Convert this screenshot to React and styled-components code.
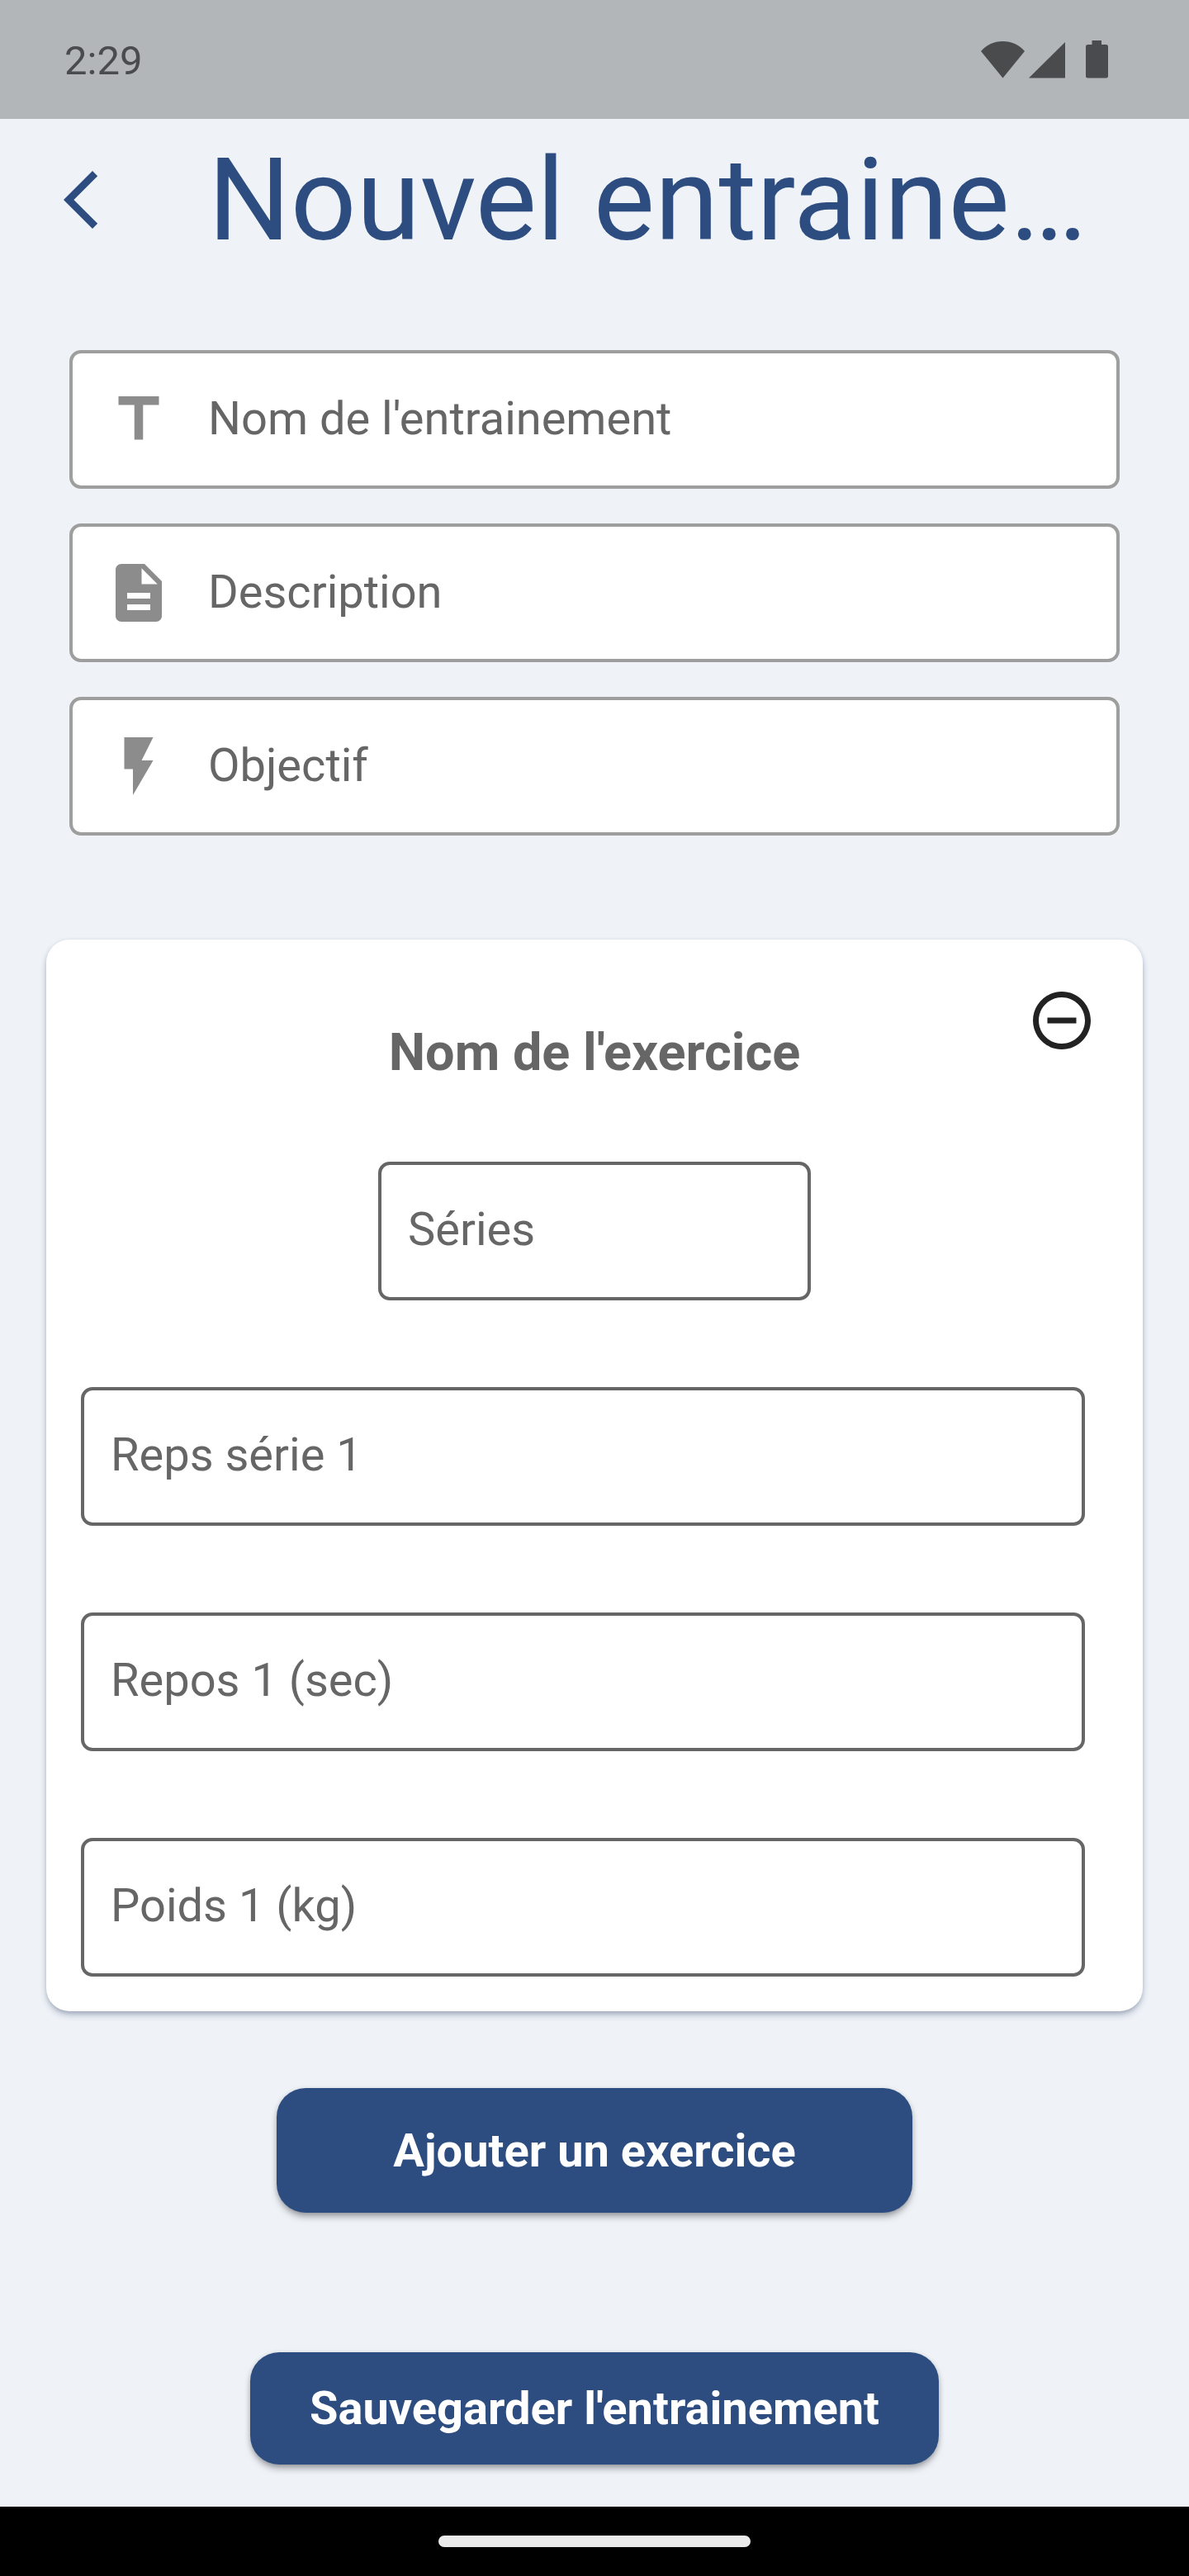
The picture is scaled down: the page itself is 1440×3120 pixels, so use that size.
import React from "react";
import styled, { createGlobalStyle } from "styled-components";

const colors = {
  background: "#eff3f8",
  status: "#b2b6b9",
  statusInk: "#4a4b4c",
  primary: "#2d4d80",
  text: "#666666",
  outline: "#9e9e9e",
  icon: "#8c8c8c",
  dark: "#222222",
};

const GlobalStyle = createGlobalStyle`
  *, *::before, *::after { box-sizing: border-box; }
  body {
    margin: 0;
    background: ${colors.background};
    font-family: Roboto, "Liberation Sans", sans-serif;
  }
`;

const Screen = styled.div`
  min-height: 100vh;
  display: flex;
  flex-direction: column;
`;

const StatusBar = styled.div`
  height: 144px;
  padding: 4px 98px 0 78px;
  display: flex;
  align-items: center;
  justify-content: space-between;
  background: ${colors.status};
  color: ${colors.statusInk};
`;

const Clock = styled.time`
  font-size: 49px;
  line-height: 56px;
`;

const Header = styled.header`
  height: 196px;
  padding: 0 84px 0 56px;
  display: flex;
  align-items: center;
  gap: 112px;
  color: ${colors.primary};
`;

const IconButton = styled.button`
  flex: none;
  width: 84px;
  height: 84px;
  padding: 0;
  border: 0;
  background: none;
  color: inherit;
  cursor: pointer;
`;

const Title = styled.h1`
  flex: 1;
  min-width: 0;
  margin: 0;
  font-size: 140px;
  font-weight: 400;
  line-height: 164px;
  white-space: nowrap;
`;

const Form = styled.form`
  flex: 1;
  display: flex;
  flex-direction: column;
  padding: 84px 56px 51px;
`;

const MainFields = styled.div`
  display: flex;
  flex-direction: column;
  gap: 42px;
  padding: 0 28px;
`;

const IconField = styled.label`
  height: 168px;
  padding: 0 38px;
  display: flex;
  align-items: center;
  gap: 42px;
  border: 4px solid ${colors.outline};
  border-radius: 14px;
  background: #ffffff;
  color: ${colors.icon};
`;

const BaseInput = styled.input`
  min-width: 0;
  margin: 0;
  border: 0;
  outline: none;
  background: transparent;
  color: ${colors.text};
  font-family: inherit;
  font-size: 56px;

  &::placeholder {
    color: ${colors.text};
    opacity: 1;
  }
`;

const PlainInput = styled(BaseInput)`
  flex: 1;
  height: 100%;
  padding: 0 0 2px;
`;

const OutlinedInput = styled(BaseInput)`
  width: ${({ $width }) => $width || "100%"};
  max-width: 100%;
  height: 168px;
  padding: 0 32px 5px;
  border: 4px solid ${colors.text};
  border-radius: 14px;
`;

const Card = styled.section`
  margin-top: 126px;
  padding-bottom: 42px;
  border-radius: 28px;
  background: #ffffff;
  box-shadow:
    0 5px 10px -2px rgba(30, 45, 85, 0.4),
    0 1px 5px rgba(30, 45, 85, 0.1);
`;

const CardHeader = styled.div`
  display: grid;
  grid-template-columns: 84px 1fr 84px;
  align-items: start;
  padding: 56px 56px 0;
  margin-bottom: 53px;
  color: ${colors.dark};
`;

const ExerciseName = styled(BaseInput)`
  grid-column: 2;
  height: 160px;
  padding: 0;
  font-size: 63px;
  font-weight: 700;
  text-align: center;
`;

const SeriesRow = styled.div`
  display: flex;
  justify-content: center;
`;

const SetFields = styled.div`
  display: flex;
  flex-direction: column;
  gap: 105px;
  padding: 105px 70px 0 42px;
`;

const Actions = styled.div`
  display: flex;
  flex-direction: column;
  align-items: center;
  gap: 169px;
  margin-top: 93px;
`;

const ActionButton = styled.button`
  width: ${({ $width }) => $width};
  max-width: 100%;
  height: ${({ $height }) => $height};
  padding: 0;
  border: 0;
  border-radius: 35px;
  background: ${colors.primary};
  color: #ffffff;
  font-family: inherit;
  font-size: 56px;
  font-weight: 700;
  white-space: nowrap;
  box-shadow:
    0 6px 10px -2px rgba(0, 0, 0, 0.36),
    0 1px 6px rgba(0, 0, 0, 0.12);
  cursor: pointer;
`;

const NavigationBar = styled.div`
  height: 84px;
  display: flex;
  align-items: center;
  justify-content: center;
  background: #000000;
`;

const HomeHandle = styled.div`
  width: 378px;
  height: 14px;
  border-radius: 7px;
  background: #ebebeb;
`;

const IconSvg = styled.svg`
  display: block;
  flex: none;
  width: 84px;
  height: 84px;
  fill: currentColor;
`;

const iconPaths = {
  back: "M17.77 3.77L16 2 6 12l10 10 1.77-1.77L9.54 12z",
  title: "M5 4v3h5.5v12h3V7H19V4z",
  description:
    "M14 2H6c-1.1 0-1.99.9-1.99 2L4 20c0 1.1.89 2 1.99 2H18c1.1 0 2-.9 2-2V8l-6-6zm2 16H8v-2h8v2zm0-4H8v-2h8v2zm-3-5V3.5L18.5 9H13z",
  flash: "M7 2v11h3v9l7-12h-4l4-8z",
  remove:
    "M7 11v2h10v-2H7zm5-9C6.48 2 2 6.48 2 12s4.48 10 10 10 10-4.48 10-10S17.52 2 12 2zm0 18c-4.41 0-8-3.59-8-8s3.59-8 8-8 8 3.59 8 8-3.59 8-8 8z",
};

function Icon({ name }) {
  return (
    <IconSvg viewBox="0 0 24 24" aria-hidden="true">
      <path d={iconPaths[name]} />
    </IconSvg>
  );
}

function StatusIcons() {
  return (
    <svg width="154" height="52" viewBox="0 0 154 52" fill="currentColor" aria-hidden="true">
      <path d="M0 14C7 6 16 2 26.500 2S46 6 53 14L26.500 46.500z" />
      <path d="M58 46.500L102 3v43.500z" />
      <path d="M134.500 1h11.500v5h5.500a2.500 2.500 0 0 1 2.500 2.500v35.500a2.500 2.500 0 0 1-2.500 2.500h-22a2.500 2.500 0 0 1-2.500-2.500v-35.500a2.500 2.500 0 0 1 2.500-2.500h5z" />
    </svg>
  );
}

const mainFields = [
  { id: "nom", icon: "title", label: "Nom de l'entrainement" },
  { id: "description", icon: "description", label: "Description" },
  { id: "objectif", icon: "flash", label: "Objectif" },
];

const setFields = [
  { id: "reps-1", label: "Reps série 1" },
  { id: "repos-1", label: "Repos 1 (sec)" },
  { id: "poids-1", label: "Poids 1 (kg)" },
];

export default function App() {
  return (
    <Screen>
      <GlobalStyle />
      <StatusBar>
        <Clock>2:29</Clock>
        <StatusIcons />
      </StatusBar>
      <Header>
        <IconButton type="button" aria-label="Retour">
          <Icon name="back" />
        </IconButton>
        <Title>Nouvel entraine…</Title>
      </Header>
      <Form onSubmit={(event) => event.preventDefault()}>
        <MainFields>
          {mainFields.map(({ id, icon, label }) => (
            <IconField key={id} htmlFor={id}>
              <Icon name={icon} />
              <PlainInput id={id} type="text" placeholder={label} aria-label={label} />
            </IconField>
          ))}
        </MainFields>
        <Card>
          <CardHeader>
            <ExerciseName type="text" placeholder="Nom de l'exercice" aria-label="Nom de l'exercice" />
            <IconButton type="button" aria-label="Supprimer l'exercice">
              <Icon name="remove" />
            </IconButton>
          </CardHeader>
          <SeriesRow>
            <OutlinedInput $width="524px" type="text" inputMode="numeric" placeholder="Séries" aria-label="Séries" />
          </SeriesRow>
          <SetFields>
            {setFields.map(({ id, label }) => (
              <OutlinedInput key={id} id={id} type="text" inputMode="numeric" placeholder={label} aria-label={label} />
            ))}
          </SetFields>
        </Card>
        <Actions>
          <ActionButton type="button" $width="770px" $height="151px">
            Ajouter un exercice
          </ActionButton>
          <ActionButton type="submit" $width="834px" $height="136px">
            Sauvegarder l'entrainement
          </ActionButton>
        </Actions>
      </Form>
      <NavigationBar>
        <HomeHandle />
      </NavigationBar>
    </Screen>
  );
}
